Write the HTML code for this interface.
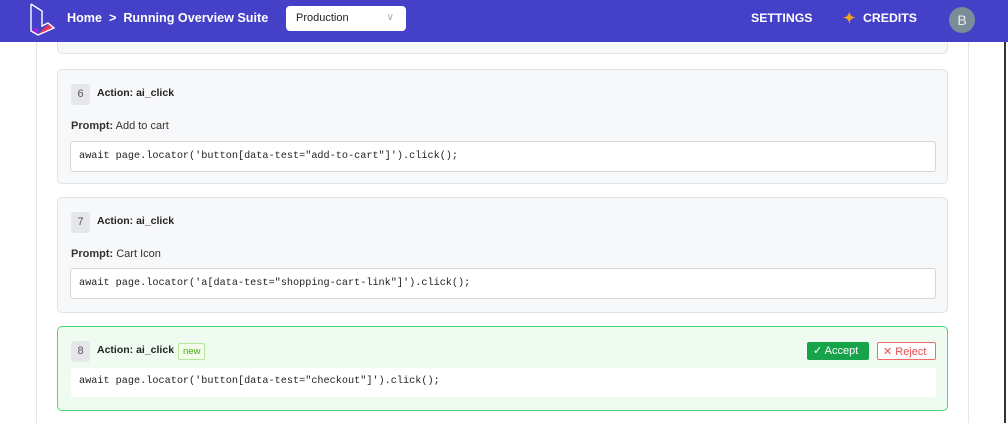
<!DOCTYPE html>
<html><head><meta charset="utf-8"><style>
*{box-sizing:border-box;margin:0;padding:0}
body{width:1008px;height:423px;overflow:hidden;background:#fff;font-family:"Liberation Sans",sans-serif;position:relative}
.hdr{position:absolute;left:0;top:0;width:1008px;height:42px;background:#4440c8;color:#fff;z-index:5}
.crumb{position:absolute;left:67px;top:11px;font-size:12.6px;font-weight:bold}
.sel{position:absolute;left:286px;top:6px;width:120px;height:25px;background:#fff;border-radius:4px;color:#222;font-size:11px;padding:6px 10px}
.sel span{position:absolute;right:12px;top:6px;color:#aaa;font-size:10px}
.nav{position:absolute;top:11px;font-size:12.3px;font-weight:bold}
.av{position:absolute;left:949px;top:7px;width:26px;height:26px;border-radius:50%;background:#7a8c97;color:#eee;font-size:14px;text-align:center;line-height:26px}
.wrap{position:absolute;left:36px;top:42px;width:933px;height:381px;border-left:1px solid #e6e6e6;border-right:1px solid #e6e6e6}
.card{position:absolute;left:57px;width:891px;background:#f7f8fa;border:1px solid #e1e3e6;border-radius:5px}
.num{position:absolute;left:13px;top:14px;width:19px;height:21px;background:#e5e7eb;border-radius:3px;color:#555;font-size:11px;text-align:center;line-height:21px}
.act{position:absolute;left:39px;top:17px;font-size:10.5px;font-weight:bold;color:#222}
.pr{position:absolute;left:13px;font-size:11px;color:#333}
.code{position:absolute;left:12px;width:866px;height:31px;background:#fff;border:1px solid #d4d6da;border-radius:3px;font-family:"Liberation Mono",monospace;font-size:10.2px;color:#222;padding:9px 8px 0;white-space:pre}
</style></head><body>
<div class="hdr">
<svg style="position:absolute;left:28px;top:2px" width="28" height="34" viewBox="0 0 28 34"><path d="M15,27 L21,22 L26,26 L10,33 Z" fill="#e8365d"/><path d="M4,28 L10,33 L10,25 Z" fill="#a020e0"/><path d="M3,2 L14,9 L14,25 M3,2 L3,29 L10,33 L26,26 L20,21 L14,24" fill="none" stroke="#fff" stroke-width="1.4"/></svg>
<div class="crumb">Home &nbsp;&gt;&nbsp; Running Overview Suite</div>
<div class="sel">Production<span>∨</span></div>
<div class="nav" style="left:751px">SETTINGS</div>
<div class="nav" style="left:843px;color:#f7a21b;font-size:15px;top:9px">✦</div>
<div class="nav" style="left:863px">CREDITS</div>
<div class="av">B</div>
</div>
<div class="wrap"></div>
<div style="position:absolute;left:1004px;top:42px;width:2px;height:381px;background:#333"></div>
<div class="card" style="top:30px;height:24px;border-top:none;border-radius:0 0 5px 5px"></div>
<div class="card" style="top:69px;height:115px"><div class="num">6</div><div class="act">Action: ai_click</div><div class="pr" style="top:50px"><b>Prompt:</b> Add to cart</div><div class="code" style="top:71px">await page.locator('button[data-test="add-to-cart"]').click();</div></div>
<div class="card" style="top:197px;height:116px"><div class="num">7</div><div class="act">Action: ai_click</div><div class="pr" style="top:50px"><b>Prompt:</b> Cart Icon</div><div class="code" style="top:70px">await page.locator('a[data-test="shopping-cart-link"]').click();</div></div>
<div class="card" style="top:326px;height:85px;background:#effbf1;border-color:#4ed47a"><div class="num">8</div><div class="act">Action: ai_click</div>
<div style="position:absolute;left:120px;top:16px;height:17px;border:1px solid #b6e79a;background:#f4fdec;color:#49a80f;font-size:9.5px;padding:2px 4px;border-radius:2px">new</div>
<div style="position:absolute;left:749px;top:15px;width:62px;height:18px;background:#17a34a;color:#fff;font-size:11px;border-radius:2px;padding:2px 6px">✓ Accept</div>
<div style="position:absolute;left:819px;top:15px;width:59px;height:18px;border:1px solid #f16b6b;background:#fff;color:#e74c4c;font-size:11px;border-radius:2px;padding:2px 5px">✕ Reject</div>
<div class="code" style="top:41px;border:none;height:29px;left:13px;width:865px;padding-top:8px">await page.locator('button[data-test="checkout"]').click();</div></div>
</body></html>
